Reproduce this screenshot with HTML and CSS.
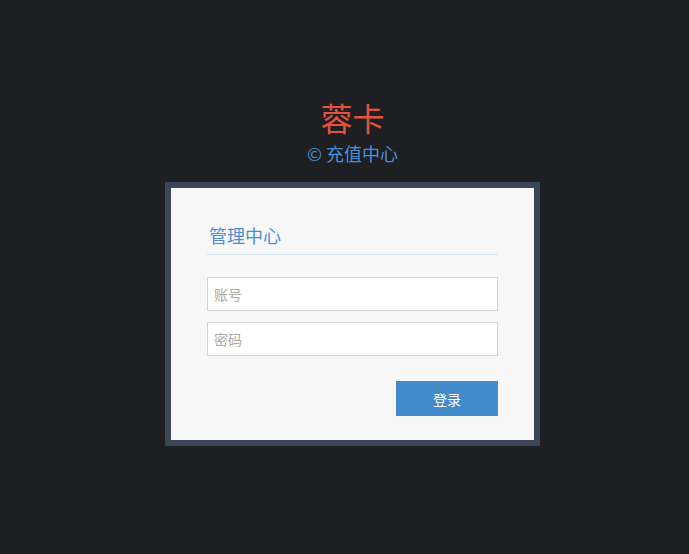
FILE: index.html
```html
<!DOCTYPE html>
<html lang="zh-CN">
<head>
<meta charset="utf-8">
<title>蓉卡 - 管理中心</title>
<link rel="stylesheet" href="styles.css">
</head>
<body>
<div class="page">
  <div class="brand">
    <h1 class="brand-title">蓉卡</h1>
    <p class="brand-sub">© 充值中心</p>
  </div>
  <div class="card">
    <div class="card-inner">
      <h2 class="card-head">管理中心</h2>
      <form class="form">
        <input class="field" type="text" placeholder="账号">
        <input class="field" type="password" placeholder="密码">
        <div class="actions">
          <button class="btn" type="button">登录</button>
        </div>
      </form>
    </div>
  </div>
</div>
</body>
</html>
```
FILE: styles.css
```css
html, body {
  margin: 0;
  padding: 0;
  background: #1d1f23;
  height: 100%;
}
body {
  font-family: "Noto Sans CJK SC", "Noto Sans", sans-serif;
}
.page {
  display: flex;
  flex-direction: column;
  align-items: center;
  padding: 97px 0 0 16px;
}
.brand {
  display: flex;
  flex-direction: column;
  align-items: center;
}
.brand-title {
  margin: 0;
  font-size: 32px;
  line-height: 40px;
  font-weight: normal;
  color: #e4513c;
}
.brand-sub {
  margin: 4px 0 0;
  font-size: 18px;
  line-height: 24px;
  color: #4a90d9;
}
.card {
  margin-top: 17px;
  border: 6px solid #3a4558;
  width: 363px;
  background: #f7f7f7;
}
.card-inner {
  padding: 35px 36px 24px;
}
.card-head {
  margin: 0;
  padding: 0 0 7px 2px;
  font-size: 18px;
  line-height: 24px;
  font-weight: normal;
  color: #4a8fd6;
  border-bottom: 1px solid #d6e2ee;
}
.form {
  display: flex;
  flex-direction: column;
  gap: 11px;
  margin-top: 22px;
}
.field {
  box-sizing: border-box;
  width: 100%;
  height: 34px;
  border: 1px solid #d4d4d4;
  background: #fff;
  padding: 0 6px;
  font-family: inherit;
  font-size: 14px;
  color: #555;
  outline: none;
}
.field::placeholder {
  color: #aaa;
}
.actions {
  display: flex;
  justify-content: flex-end;
  margin-top: 14px;
}
.btn {
  width: 102px;
  height: 35px;
  border: none;
  background: #428bca;
  color: #fff;
  font-family: inherit;
  font-size: 14px;
  cursor: pointer;
}
```
